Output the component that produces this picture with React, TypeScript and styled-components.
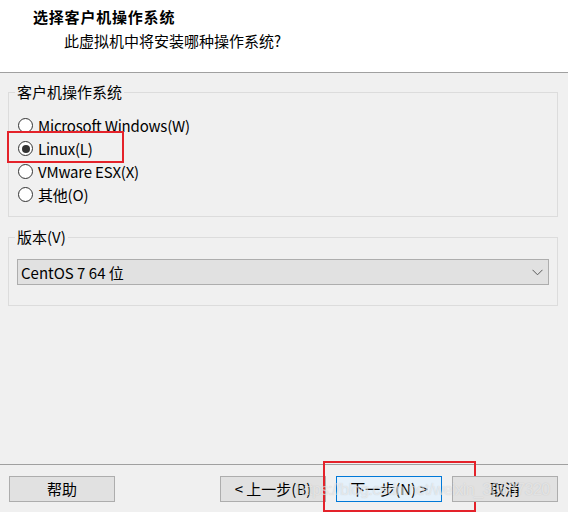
import React from "react";
import styled, { createGlobalStyle } from "styled-components";

const Global = createGlobalStyle`
  html, body { margin: 0; padding: 0; background: #f0f0f0; }
  body { font-family: "Noto Sans CJK SC", "Noto Sans", sans-serif; font-size: 15px; color: #000; }
  * { box-sizing: border-box; }
`;

const Window = styled.div`
  width: 568px;
  height: 512px;
  display: flex;
  flex-direction: column;
  background: #f0f0f0;
  overflow: hidden;
`;

const Header = styled.header`
  height: 73px;
  background: #fff;
  border-bottom: 1px solid #a0a0a0;
  padding: 7px 0 0 33px;
  display: flex;
  flex-direction: column;
`;

const Title = styled.div`
  font-weight: 700;
  font-size: 15px;
  line-height: 20px;
  letter-spacing: 0.8px;
`;

const Subtitle = styled.div`
  margin: 4px 0 0 31px;
  line-height: 20px;
`;

const Main = styled.main`
  flex: 1;
  padding: 9px 10px 0 8px;
  display: flex;
  flex-direction: column;
  gap: 10px;
`;

const Group = styled.fieldset<{ $pt: number; $pb: number }>`
  margin: 0;
  border: 1px solid #dcdcdc;
  padding: ${(p) => p.$pt}px 0 ${(p) => p.$pb}px 0;
  min-width: 0;
`;

const Legend = styled.legend`
  margin-left: 6px;
  padding: 0 2px;
  line-height: 20px;
`;

const RadioList = styled.div`
  display: flex;
  flex-direction: column;
  padding-left: 9px;
`;

const RadioRow = styled.label`
  position: relative;
  height: 23px;
  display: flex;
  align-items: center;
  gap: 5px;
  letter-spacing: -0.2px;
`;

const Circle = styled.span<{ $checked?: boolean }>`
  width: 15px;
  height: 15px;
  border-radius: 50%;
  border: 1px solid #333;
  background: #fff;
  display: flex;
  align-items: center;
  justify-content: center;
  &::after {
    content: "";
    width: 8px;
    height: 8px;
    border-radius: 50%;
    background: ${(p) => (p.$checked ? "#333" : "transparent")};
  }
`;

const Highlight = styled.span<{ $l: number; $t: number; $w: number; $h: number }>`
  position: absolute;
  left: ${(p) => p.$l}px;
  top: ${(p) => p.$t}px;
  width: ${(p) => p.$w}px;
  height: ${(p) => p.$h}px;
  border: 2px solid #e4222a;
  pointer-events: none;
`;

const Combo = styled.div`
  height: 26px;
  margin: 0 8px;
  background: #e1e1e1;
  border: 1px solid #adadad;
  display: flex;
  align-items: center;
  justify-content: space-between;
  padding: 0 5px 0 3px;
`;

const Footer = styled.footer`
  position: relative;
  height: 48px;
  border-top: 1px solid #a0a0a0;
  padding: 11px 10px 0 9px;
  display: flex;
  align-items: flex-start;
  justify-content: space-between;
`;

const ButtonGroup = styled.div`
  display: flex;
  gap: 10px;
`;

const Button = styled.button<{ $primary?: boolean }>`
  position: relative;
  width: 106px;
  height: 26px;
  margin: 0;
  padding: 0;
  font: inherit;
  color: #000;
  background: ${(p) => (p.$primary ? "#e5f1fb" : "#e1e1e1")};
  border: 1px solid ${(p) => (p.$primary ? "#0078d7" : "#adadad")};
  display: flex;
  align-items: center;
  justify-content: center;
  line-height: 20px;
`;

const Watermark = styled.div`
  position: absolute;
  left: 296px;
  top: 15px;
  font-family: "Liberation Sans", Arial, sans-serif;
  font-size: 16px;
  line-height: 20px;
  letter-spacing: -0.5px;
  color: rgba(255, 255, 255, 0.55);
  text-shadow: 0 0 1px rgba(120, 120, 120, 0.35);
  white-space: nowrap;
  pointer-events: none;
`;

const options = [
  { label: "Microsoft Windows(W)", checked: false },
  { label: "Linux(L)", checked: true },
  { label: "VMware ESX(X)", checked: false },
  { label: "其他(O)", checked: false },
];

export default function App() {
  return (
    <Window>
      <Global />
      <Header>
        <Title>选择客户机操作系统</Title>
        <Subtitle>此虚拟机中将安装哪种操作系统?</Subtitle>
      </Header>
      <Main>
        <Group $pt={12} $pb={10}>
          <Legend>客户机操作系统</Legend>
          <RadioList>
            {options.map((o) => (
              <RadioRow key={o.label}>
                <Circle $checked={o.checked} />
                {o.label}
                {o.checked && <Highlight $l={-11} $t={-6} $w={117} $h={32} />}
              </RadioRow>
            ))}
          </RadioList>
        </Group>
        <Group $pt={12} $pb={20}>
          <Legend>版本(V)</Legend>
          <Combo>
            <span>CentOS 7 64 位</span>
            <svg width="11" height="7" viewBox="0 0 11 7">
              <path d="M0.5 0.8 L5.5 5.8 L10.5 0.8" fill="none" stroke="#5a5a5a" strokeWidth="1" />
            </svg>
          </Combo>
        </Group>
      </Main>
      <Footer>
        <Button>帮助</Button>
        <ButtonGroup>
          <Button>&lt; 上一步(B)</Button>
          <Button $primary>
            下一步(N) &gt;
            <Highlight $l={-14} $t={-16} $w={153} $h={51} />
          </Button>
          <Button>取消</Button>
        </ButtonGroup>
        <Watermark>https://blog.csdn.net/weixin_38637320</Watermark>
      </Footer>
    </Window>
  );
}
